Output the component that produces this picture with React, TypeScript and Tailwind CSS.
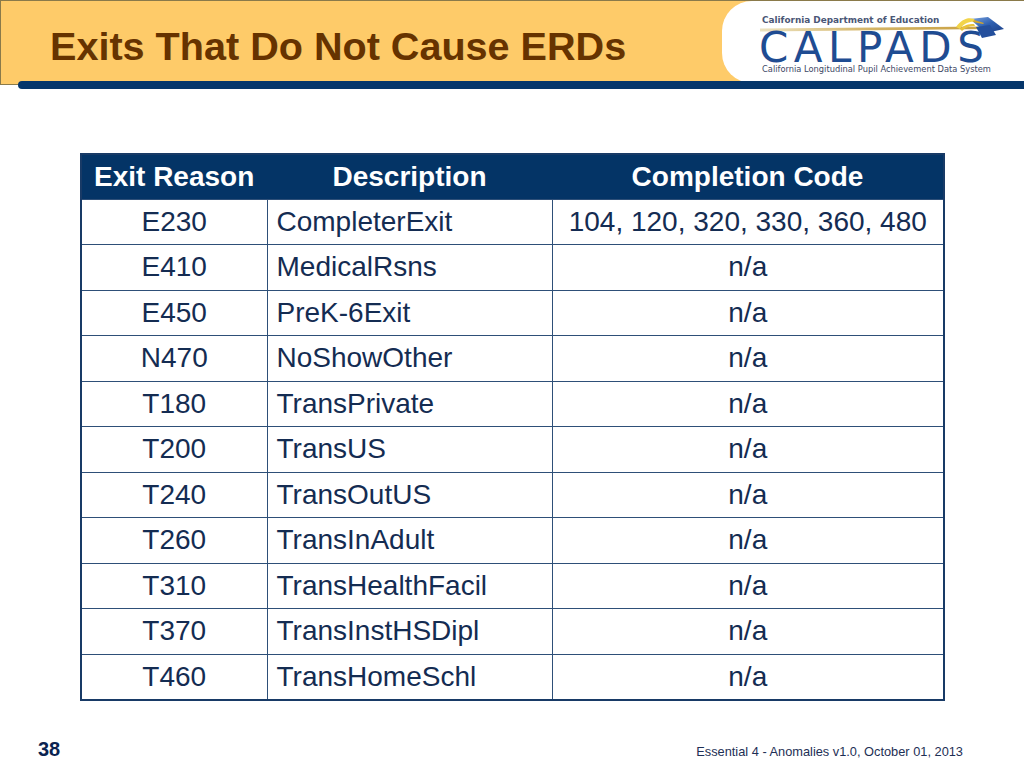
import React from "react";

const rows: [string, string, string][] = [
  ["E230", "CompleterExit", "104, 120, 320, 330, 360, 480"],
  ["E410", "MedicalRsns", "n/a"],
  ["E450", "PreK-6Exit", "n/a"],
  ["N470", "NoShowOther", "n/a"],
  ["T180", "TransPrivate", "n/a"],
  ["T200", "TransUS", "n/a"],
  ["T240", "TransOutUS", "n/a"],
  ["T260", "TransInAdult", "n/a"],
  ["T310", "TransHealthFacil", "n/a"],
  ["T370", "TransInstHSDipl", "n/a"],
  ["T460", "TransHomeSchl", "n/a"],
];

function Cap() {
  return (
    <svg width="52" height="28" viewBox="0 0 52 28" className="absolute left-[232px] top-[12px]">
      <defs>
        <linearGradient id="capg" x1="0" y1="0" x2="1" y2="1">
          <stop offset="0" stopColor="#7fa6e0" />
          <stop offset="0.5" stopColor="#2d5fb0" />
          <stop offset="1" stopColor="#1c3f86" />
        </linearGradient>
      </defs>
      <path d="M16 6 L34 4 L50 16 L32 20 Z" fill="url(#capg)" />
      <path d="M22 14 L36 12 L42 22 L28 25 Z" fill="#244f9c" />
      <path d="M2 14 C8 6 14 4 20 6 L22 9 C16 8 10 10 6 16 Z" fill="#f2d44a" />
      <path d="M6 16 C10 12 14 11 20 11 L21 13 C15 13 11 15 8 18 Z" fill="#e8c23a" />
      <path d="M20 7 L30 10 L29 11 L19 9 Z" fill="#d4a62a" />
    </svg>
  );
}

function Logo() {
  return (
    <div className="relative h-full w-full">
      <div className="absolute left-[40px] top-[15px] text-[8.9px] font-bold leading-none text-[#4a5676] [font-family:'DejaVu_Sans',sans-serif]">
        California Department of Education
      </div>
      <svg width="230" height="6" viewBox="0 0 230 6" className="absolute left-[38px] top-[25px]">
        <defs>
          <linearGradient id="sw" x1="0" y1="0" x2="1" y2="0">
            <stop offset="0" stopColor="#ece2c0" />
            <stop offset="0.5" stopColor="#d3b364" />
            <stop offset="1" stopColor="#c9a040" />
          </linearGradient>
        </defs>
        <path d="M0 2.5 L225 0.5 L228 3 L0 5.5 Z" fill="url(#sw)" />
      </svg>
      <Cap />
      <div className="absolute left-[37px] top-[31px] text-[42px] leading-[31px] tracking-[5.5px] text-[#1f4c92] [font-family:'DejaVu_Sans',sans-serif]">
        CALPADS
      </div>
      <div className="absolute left-[40px] top-[64px] text-[8.3px] leading-none text-[#3d4866] [font-family:'DejaVu_Sans',sans-serif]">
        California Longitudinal Pupil Achievement Data System
      </div>
    </div>
  );
}

export default function App() {
  return (
    <div className="flex h-[768px] w-[1024px] flex-col overflow-hidden bg-white [font-family:'Liberation_Sans',Arial,sans-serif]">
      <div className="flex h-[85px] bg-[#fecb69] border-t border-l border-b border-[#8a7a4a]">
        <div className="flex flex-1 items-start pl-[49px] pt-[21px]">
          <h1 className="text-[39.6px] font-bold leading-[48px] text-[#663300]">Exits That Do Not Cause ERDs</h1>
        </div>
        <div className="h-[82px] w-[302px] rounded-l-[30px] bg-white">
          <Logo />
        </div>
      </div>
      <div className="ml-[18px] mt-[-4px] h-[8px] rounded-l-full bg-[#05366b]" />
      <div className="pl-[80px] pt-[64px]">
        <table className="w-[863px] table-fixed border-collapse border-2 border-[#183a66] text-[28px] text-[#142c52]">
          <colgroup>
            <col className="w-[186px]" />
            <col className="w-[285px]" />
            <col className="w-[392px]" />
          </colgroup>
          <thead>
            <tr className="h-[45px] bg-[#043466] text-white">
              <th className="pl-[12px] text-left font-bold">Exit Reason</th>
              <th className="font-bold">Description</th>
              <th className="font-bold">Completion Code</th>
            </tr>
          </thead>
          <tbody>
            {rows.map((r) => (
              <tr key={r[0]} className="h-[45.5px]">
                <td className="border border-[#2e4f78] text-center leading-none">{r[0]}</td>
                <td className="border border-[#2e4f78] pl-[9px] leading-none">{r[1]}</td>
                <td className="border border-[#2e4f78] text-center leading-none">{r[2]}</td>
              </tr>
            ))}
          </tbody>
        </table>
      </div>
      <div className="mt-auto flex items-end justify-between pb-[9px] pl-[38px] pr-[61px]">
        <span className="text-[20px] font-bold leading-none text-[#0b2451]">38</span>
        <span className="text-[12.8px] leading-none text-[#1e2f55]">Essential 4 - Anomalies v1.0, October 01, 2013</span>
      </div>
    </div>
  );
}
